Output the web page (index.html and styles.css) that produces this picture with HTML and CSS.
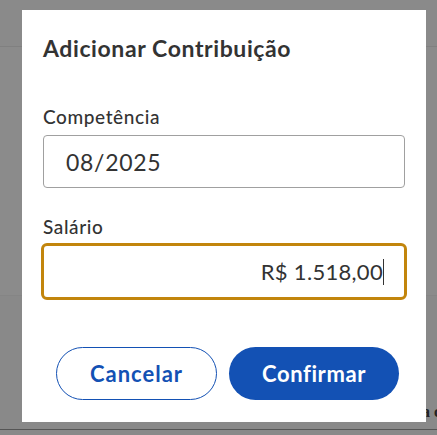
FILE: index.html
```html
<!DOCTYPE html>
<html lang="pt-BR">
<head>
<meta charset="utf-8">
<link rel="stylesheet" href="styles.css">
<title>Adicionar Contribuição</title>
</head>
<body>
<div class="page">
  <div class="page-bar"></div>
  <div class="page-body"></div>
  <div class="page-foot">
    <span class="foot-text">a c</span>
    <div class="foot-fields"></div>
  </div>
</div>
<div class="modal">
  <h2 class="modal-title">Adicionar Contribuição</h2>
  <div class="field first">
    <label class="label">Competência</label>
    <div class="input">08/2025</div>
  </div>
  <div class="field second">
    <label class="label">Salário</label>
    <div class="input focus"><span>R$ 1.518,00</span><span class="caret"></span></div>
  </div>
  <div class="actions">
    <button class="btn secondary">Cancelar</button>
    <button class="btn primary">Confirmar</button>
  </div>
</div>
</body>
</html>
```

FILE: styles.css
```css
* { box-sizing: border-box; }
html, body { margin: 0; padding: 0; }
body {
  width: 437px;
  height: 435px;
  overflow: hidden;
  background: #898989;
  font-family: Lato, "Open Sans", sans-serif;
  color: #333;
}
.page { display: flex; flex-direction: column; height: 435px; }
.page-bar { height: 47px; background: #8a8a8a; border-bottom: 1px solid #808080; }
.page-body { flex: 1; background: #8b8b8b; }
.page-foot { height: 140px; background: #898989; border-top: 1px solid #858585; position: relative; display: flex; flex-direction: column; justify-content: flex-end; }
.foot-text { position: absolute; right: -4px; bottom: 14px; font-family: "Liberation Serif", serif; font-weight: bold; font-size: 16px; color: #222; }
.foot-fields { height: 6px; border-top: 1px solid #555; }
.modal {
  position: fixed;
  left: 22px;
  top: 10px;
  width: 404px;
  height: 412px;
  background: #fff;
  padding: 0 21px;
  display: flex;
  flex-direction: column;
}
.modal-title {
  margin: 0;
  padding-top: 25px;
  font-size: 23px;
  font-weight: 700;
  line-height: 26px;
  color: #333;
  letter-spacing: 0.6px;
}
.field { display: flex; flex-direction: column; }
.field.first { margin-top: 46px; }
.field.second { margin-top: 29px; }
.label {
  font-size: 19px;
  font-weight: 500;
  line-height: 20px;
  color: #333;
  margin-bottom: 8px;
  letter-spacing: 0.6px;
}
.input {
  height: 53px;
  border: 1px solid #a0a0a0;
  border-radius: 4px;
  display: flex;
  align-items: center;
  padding: 0 22px;
  font-size: 23px;
  color: #333;
  letter-spacing: 0.7px;
}
.input.focus {
  margin: -2px -2px 0;
  height: 57px;
  border: 3px solid #c2850c;
  border-radius: 6px;
  justify-content: flex-end;
  padding: 0 20px;
  font-size: 22px;
  letter-spacing: 0.3px;
}
.caret { width: 1px; height: 26px; background: #333; margin-left: 0; }
.actions {
  margin-top: 47px;
  display: flex;
  gap: 12px;
  padding-left: 13px;
}
.btn {
  height: 53px;
  border-radius: 27px;
  font-family: Lato, "Open Sans", sans-serif;
  font-size: 22px;
  font-weight: 700;
  padding: 0;
  letter-spacing: 0.6px;
}
.btn.secondary { width: 161px; background: #fff; color: #1351b4; border: 1px solid #1351b4; letter-spacing: 1px; }
.btn.primary { width: 170px; background: #1351b4; color: #fff; border: none; }
```
